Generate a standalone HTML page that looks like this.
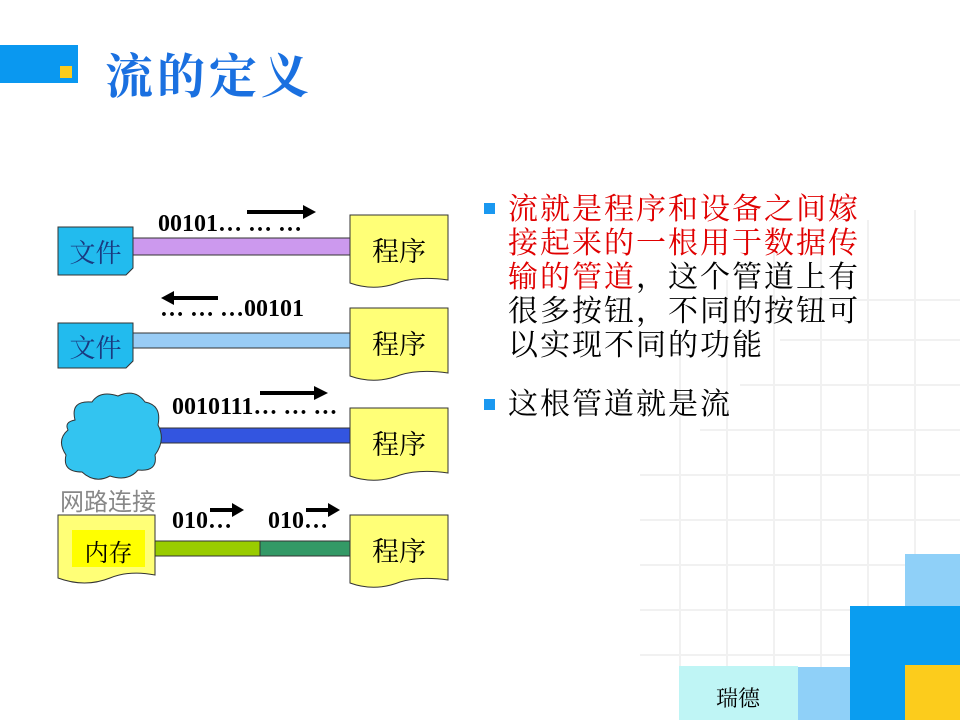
<!DOCTYPE html>
<html><head><meta charset="utf-8"><style>
body{margin:0;width:960px;height:720px;background:#fff;position:relative;overflow:hidden;font-family:"Liberation Serif","Noto Serif CJK SC",serif}
.a{position:absolute}
.t{font-family:"Liberation Serif","Noto Serif CJK SC",serif;font-size:30px;letter-spacing:2px;line-height:34px;color:#000;white-space:nowrap}
.num{position:absolute;font-family:"Liberation Serif",serif;font-weight:bold;font-size:24px;color:#000;white-space:nowrap}
.prog{position:absolute;width:98px;font-size:27px;text-align:center;font-family:"Liberation Serif","Noto Serif CJK SC",serif}
</style></head><body>
<svg class="a" style="left:0;top:0" width="960" height="720">
 <g stroke="#f1f1f1" stroke-width="2" fill="none">
  <path d="M680 330V720M727 280V720M774 250V720M821 230V720M868 220V720M915 210V720"/>
  <path d="M640 475H960M640 520H960M640 565H960M640 610H960M640 655H960M700 430H960M740 385H960M780 340H960M820 300H960"/>
 </g>
 <rect x="679" y="666" width="119" height="54" fill="#bff5f5"/>
 <rect x="798" y="667" width="52" height="53" fill="#8fd0f8"/>
 <rect x="850" y="606" width="110" height="114" fill="#0a9df0"/>
 <rect x="905" y="554" width="55" height="52" fill="#8fd0f8"/>
 <rect x="905" y="665" width="55" height="55" fill="#fccc1c"/>
 <rect x="0" y="45" width="78" height="38" fill="#0a98f0"/>
 <rect x="60" y="66" width="12" height="12" fill="#fccc1c"/>
 <g stroke="#333" stroke-width="1">
  <rect x="133" y="238" width="217" height="17" fill="#cc99ee"/>
  <rect x="133" y="333" width="217" height="15" fill="#99ccf5"/>
  <rect x="160" y="428" width="190" height="15" fill="#3355e0"/>
  <rect x="155" y="541" width="105" height="15" fill="#99cc00"/>
  <rect x="260" y="541" width="90" height="15" fill="#339966"/>
  <path d="M58 227H133V268L126 275H58Z" fill="#22bbee"/>
  <path d="M58 323H133V361L126 368H58Z" fill="#22bbee"/>
  <path d="M350 215H448V280Q420 276 400 282Q375 292 350 283Z" fill="#ffff77"/>
  <path d="M350 308H448V373Q420 369 400 375Q375 385 350 376Z" fill="#ffff77"/>
  <path d="M350 408H448V473Q420 469 400 475Q375 485 350 476Z" fill="#ffff77"/>
  <path d="M350 515H448V580Q420 576 400 582Q375 592 350 583Z" fill="#ffff77"/>
  <path d="M58 515H155V575Q130 570 110 578Q85 588 58 578Z" fill="#ffff77"/>
  <path d="M75 420Q70 400 92 402Q100 390 118 396Q135 388 145 402Q162 405 158 425Q166 440 155 455Q158 472 138 470Q128 482 110 476Q95 484 82 472Q62 472 66 455Q56 440 68 430Q64 422 75 420Z" fill="#33c4f0"/>
 </g>
 <rect x="72" y="530" width="73" height="37" fill="#ffff00"/>
 <g fill="#000">
  <rect x="247" y="210" width="58" height="4"/><path d="M303 205L316 212L303 219Z"/>
  <rect x="172" y="296" width="46" height="4"/><path d="M174 291L161 298L174 305Z"/>
  <rect x="260" y="391" width="56" height="4"/><path d="M314 386L328 393L314 400Z"/>
  <rect x="210" y="508" width="24" height="4"/><path d="M232 503L244 510L232 517Z"/>
  <rect x="306" y="508" width="24" height="4"/><path d="M328 503L340 510L328 517Z"/>
 </g>
</svg>
<div class="a" style="left:105px;top:38px;font-size:48px;color:#1a70e0;font-family:'Liberation Serif','Noto Serif CJK SC',serif;font-weight:bold;letter-spacing:4px">流的定义</div>

<div class="num" style="left:158px;top:211px">00101… … …</div>
<div class="num" style="left:160px;top:296px">… … …00101</div>
<div class="num" style="left:172px;top:394px">0010111… … …</div>
<div class="num" style="left:172px;top:508px">010…</div>
<div class="num" style="left:268px;top:508px">010…</div>
<div class="prog" style="left:58px;top:233px;width:75px;font-size:26px;color:#1a3a80">文件</div>
<div class="prog" style="left:58px;top:328px;width:75px;font-size:26px;color:#1a3a80">文件</div>
<div class="prog" style="left:350px;top:230px">程序</div>
<div class="prog" style="left:350px;top:323px">程序</div>
<div class="prog" style="left:350px;top:423px">程序</div>
<div class="prog" style="left:350px;top:530px">程序</div>
<div class="prog" style="left:72px;top:533px;width:73px;font-size:24px">内存</div>
<div class="a" style="left:60px;top:482px;font-size:24px;color:#888;font-family:'Liberation Sans','Noto Sans CJK SC',sans-serif">网路连接</div>

<div class="a" style="left:484px;top:203px;width:11px;height:11px;background:#1a98f0"></div>
<div class="a t" style="left:508px;top:193px"><span style="color:#e00000">流就是程序和设备之间嫁<br>接起来的一根用于数据传<br>输的管道</span>，这个管道上有<br>很多按钮，不同的按钮可<br>以实现不同的功能</div>
<div class="a" style="left:484px;top:399px;width:11px;height:11px;background:#1a98f0"></div>
<div class="a t" style="left:508px;top:388px">这根管道就是流</div>
<div class="a" style="left:716px;top:682px;font-size:22px;font-family:'Liberation Serif','Noto Serif CJK SC',serif">瑞德</div>
</body></html>
